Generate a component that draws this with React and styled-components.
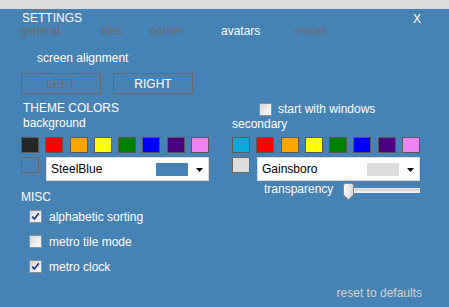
import React from 'react'
import styled, { createGlobalStyle } from 'styled-components'

const Global = createGlobalStyle`
  html, body {
    margin: 0;
    padding: 0;
    background: #4682B4;
  }
  body {
    font-family: "Liberation Sans", Arial, sans-serif;
    font-size: 12px;
  }
`

const Window = styled.div`
  width: 449px;
  height: 307px;
  background: #4682B4;
  color: #f4f4f4;
  display: flex;
  flex-direction: column;
  overflow: hidden;
`

const TopStrip = styled.div`
  height: 9px;
  background: #dcdcdc;
  flex-shrink: 0;
`

const Header = styled.div`
  display: flex;
  justify-content: space-between;
  padding: 3px 28px 0 22px;
  line-height: 12px;
  color: #fff;
`

const Close = styled.span`
  position: relative;
  top: 1px;
  cursor: pointer;
`

const Tabs = styled.div`
  display: flex;
  padding-left: 20px;
  margin-top: 1px;
  line-height: 12px;
`

const Tab = styled.span`
  width: ${p => p.$w ? `${p.$w}px` : 'auto'};
  color: ${p => p.$active ? '#fff' : '#6c6c6c'};
  cursor: pointer;
`

const Body = styled.div`
  display: flex;
  gap: 23px;
  padding-left: 21px;
`

const Column = styled.div`
  width: 188px;
  display: flex;
  flex-direction: column;
  padding-top: ${p => p.$top || 0}px;
`

const Label = styled.div`
  line-height: 14px;
  margin-top: ${p => p.$mt || 0}px;
  padding-left: ${p => p.$indent || 0}px;
  color: ${p => p.$muted ? '#eef2f6' : '#fff'};
`

const ButtonRow = styled.div`
  display: flex;
  gap: 12px;
  margin-top: 8px;
`

const AlignButton = styled.button`
  width: 80px;
  height: 21px;
  padding: 0;
  background: transparent;
  border: 1px solid #686868;
  font: inherit;
  font-size: 12px;
  color: ${p => p.$disabled ? '#6c6c6c' : '#fff'};
`

const Swatches = styled.div`
  display: flex;
  justify-content: space-between;
  margin-top: ${p => p.$mt || 7}px;
`

const Swatch = styled.div`
  width: 18px;
  height: 16px;
  box-sizing: border-box;
  border: 1px solid #5a5a5a;
  background: ${p => p.$c};
`

const PickerRow = styled.div`
  display: flex;
  gap: 7px;
  margin-top: 4px;
  align-items: flex-start;
`

const Current = styled(Swatch)`
  border-color: #686868;
`

const Dropdown = styled.div`
  flex: 1;
  height: 24px;
  box-sizing: border-box;
  background: #fff;
  border: 1px solid #dadada;
  display: flex;
  align-items: center;
  padding: 0 4px 0 4px;
  color: #000;
  font-size: 12px;
`

const DropText = styled.span`
  flex: 1;
`

const DropColor = styled.span`
  width: 32px;
  height: 13px;
  background: ${p => p.$c};
  margin-right: 8px;
  margin-top: 1px;
`

const Arrow = () => (
  <svg width="7" height="4" viewBox="0 0 7 4" style={{ marginTop: 2, marginRight: 1 }}>
    <path d="M0 0 H7 L3.5 4 Z" fill="#000" />
  </svg>
)

const CheckRow = styled.label`
  display: flex;
  align-items: center;
  gap: ${p => p.$gap || 7}px;
  height: ${p => p.$h || 25}px;
  padding-left: ${p => p.$indent || 8}px;
  margin-top: ${p => p.$mt || 0}px;
  line-height: 14px;
  color: #fff;
`

const Box = styled.span`
  width: 13px;
  height: 13px;
  box-sizing: border-box;
  border: 1px solid #8e8f8f;
  background: linear-gradient(135deg, #d4d4d4 0%, #f4f4f4 70%, #ffffff 100%);
  display: flex;
  align-items: center;
  justify-content: center;
  flex-shrink: 0;
`

const Check = ({ checked }) => (
  <Box>
    {checked && (
      <svg width="9" height="9" viewBox="0 0 9 9">
        <path d="M1.2 4.6 L3.4 7 L7.8 1.2" fill="none" stroke="#21348c" strokeWidth="1.7" />
      </svg>
    )}
  </Box>
)

const SliderRow = styled.div`
  display: flex;
  align-items: flex-start;
  margin-top: 1px;
  padding-left: 32px;
  gap: 10px;
`

const Track = styled.div`
  position: relative;
  flex: 1;
  height: 17px;
  margin-top: 1px;
  &::before {
    content: '';
    position: absolute;
    left: 6px;
    right: 0;
    top: 5px;
    height: 4px;
    background: linear-gradient(#cfcfcf, #f8f8f8);
    border-top: 1px solid #e8e8e8;
  }
`

const Thumb = styled.svg`
  position: absolute;
  left: 0;
  top: 0;
`

const Footer = styled.div`
  margin-top: auto;
  text-align: right;
  padding: 0 27px 7px 0;
  line-height: 14px;
  color: #d3d3d3;
`

const leftColors = ['#262626', '#ff0000', '#ffa500', '#ffff00', '#008000', '#0000ff', '#4b0082', '#ee82ee']
const rightColors = ['#0ea7d9', '#ff0000', '#ffa500', '#ffff00', '#008000', '#0000ff', '#4b0082', '#ee82ee']

const tabs = [
  { name: 'general', w: 81 },
  { name: 'tiles', w: 49 },
  { name: 'corner', w: 71 },
  { name: 'avatars', w: 74, active: true },
  { name: 'extras' },
]

export default function App() {
  return (
    <>
      <Global />
      <Window>
        <TopStrip />
        <Header>
          <span>SETTINGS</span>
          <Close>X</Close>
        </Header>
        <Tabs>
          {tabs.map(t => (
            <Tab key={t.name} $w={t.w} $active={t.active}>{t.name}</Tab>
          ))}
        </Tabs>
        <Body>
          <Column>
            <Label $mt={14} $indent={16}>screen alignment</Label>
            <ButtonRow>
              <AlignButton $disabled>LEFT</AlignButton>
              <AlignButton>RIGHT</AlignButton>
            </ButtonRow>
            <Label $mt={7} $indent={2}>THEME COLORS</Label>
            <Label $mt={1} $indent={2}>background</Label>
            <Swatches $mt={7}>
              {leftColors.map(c => <Swatch key={c} $c={c} />)}
            </Swatches>
            <PickerRow>
              <Current $c="transparent" />
              <Dropdown>
                <DropText>SteelBlue</DropText>
                <DropColor $c="#4682B4" />
                <Arrow />
              </Dropdown>
            </PickerRow>
            <Label $mt={9}>MISC</Label>
            <CheckRow><Check checked />alphabetic sorting</CheckRow>
            <CheckRow><Check />metro tile mode</CheckRow>
            <CheckRow><Check checked />metro clock</CheckRow>
          </Column>
          <Column $top={65}>
            <CheckRow $h={14} $indent={27} $gap={6}><Check />start with windows</CheckRow>
            <Label $mt={1}>secondary</Label>
            <Swatches $mt={6}>
              {rightColors.map(c => <Swatch key={c} $c={c} />)}
            </Swatches>
            <PickerRow>
              <Current $c="#dcdcdc" />
              <Dropdown>
                <DropText>Gainsboro</DropText>
                <DropColor $c="#dcdcdc" />
                <Arrow />
              </Dropdown>
            </PickerRow>
            <SliderRow>
              <Label>transparency</Label>
              <Track>
                <Thumb width="11" height="17" viewBox="0 0 11 17">
                  <defs>
                    <linearGradient id="thumb" x1="0" x2="1" y1="0" y2="0">
                      <stop offset="0" stopColor="#ffffff" />
                      <stop offset="1" stopColor="#d6d6d6" />
                    </linearGradient>
                  </defs>
                  <path d="M0.5 2.5 Q0.5 0.5 2.5 0.5 H8.5 Q10.5 0.5 10.5 2.5 V12 L5.5 16.5 L0.5 12 Z" fill="url(#thumb)" stroke="#8a8a8a" />
                </Thumb>
              </Track>
            </SliderRow>
          </Column>
        </Body>
        <Footer>reset to defaults</Footer>
      </Window>
    </>
  )
}
